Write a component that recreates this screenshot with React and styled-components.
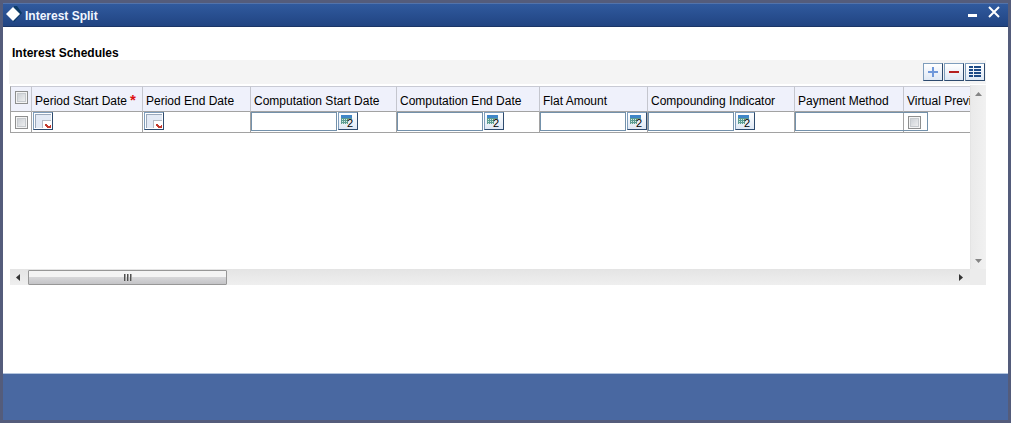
import React from "react";
import styled, { createGlobalStyle } from "styled-components";

const GlobalStyle = createGlobalStyle`
  * {
    box-sizing: border-box;
  }
  body {
    margin: 0;
    font-family: "Liberation Sans", Arial, sans-serif;
    font-size: 12px;
    color: #000000;
  }
`;

const Window = styled.div`
  display: flex;
  flex-direction: column;
  min-height: 100vh;
  border: 3px solid #545c7b;
  background-color: #ffffff;
`;

const TitleBar = styled.header`
  display: flex;
  align-items: center;
  height: 24px;
  padding: 0 8px 0 2px;
  background: linear-gradient(#305a9e, #214482);
  border-top: 1px solid #5273ab;
  border-bottom: 1px solid #1b3566;
`;

const Title = styled.h1`
  flex: 1;
  margin: 0 0 0 2px;
  padding-top: 2px;
  font-size: 12px;
  line-height: 16px;
  color: #f0f6ff;
`;

const WindowButton = styled.button`
  display: flex;
  align-self: flex-start;
  width: 12px;
  height: 16px;
  margin-left: 10px;
  padding: 0;
  border: none;
  background: none;
`;

const Body = styled.main`
  flex: 1;
  padding: 18px 22px 0 6px;
`;

const Heading = styled.h2`
  margin: 0;
  padding: 1px 0 0 3px;
  font-size: 12px;
  line-height: 14px;
`;

const Toolbar = styled.div`
  display: flex;
  justify-content: flex-end;
  gap: 1px;
  height: 24px;
  padding: 3px 1px 0 0;
  background-color: #f4f4f4;
`;

const IconButton = styled.button`
  display: flex;
  align-items: center;
  justify-content: center;
  flex: none;
  width: 20px;
  height: 18px;
  padding: 0;
  border: 1px solid #7e9dbc;
  border-right-color: #2d4a6e;
  border-bottom-color: #2d4a6e;
  background: linear-gradient(#ffffff, #dfe8f4);
`;

const Grid = styled.div`
  display: grid;
  grid-template-columns: minmax(0, 1fr) 16px;
  grid-template-rows: 184px 16px;
  margin: 1px 0 0 1px;
`;

const Viewport = styled.div`
  overflow: hidden;
  padding-top: 1px;
`;

const Table = styled.table`
  width: 1040px;
  table-layout: fixed;
  border-collapse: separate;
  border-spacing: 0;
`;

const Th = styled.th`
  height: 26px;
  padding: 4px 0 0 3px;
  border-top: 1px solid #c8cad4;
  border-right: 1px solid #c4c6ce;
  border-bottom: 1px solid #a2a2a2;
  background-color: #eff1fb;
  font-weight: normal;
  line-height: 15px;
  text-align: left;
  white-space: nowrap;
  &:first-child {
    padding: 0 0 3px 4px;
    border-left: 1px solid #a2a2a2;
  }
`;

const Required = styled.span`
  margin-left: 3px;
  color: #dd1111;
  font-size: 15px;
  font-weight: bold;
  line-height: 12px;
`;

const Td = styled.td`
  height: 21px;
  padding: 0;
  border-right: 1px solid #a2a2a2;
  border-bottom: 1px solid #a2a2a2;
  &:first-child {
    padding-left: 4px;
    border-left: 1px solid #a2a2a2;
  }
`;

const Field = styled.div`
  display: flex;
  gap: 1px;
  height: 20px;
  padding-left: ${(props) => (props.$inset ? "1px" : "0")};
`;

const TextInput = styled.input`
  flex: none;
  width: ${(props) => (props.$wide ? "133px" : "86px")};
  height: 19px;
  padding: 0 3px;
  border: 1px solid #7391ab;
  background: transparent;
  font: inherit;
`;

const Checkbox = styled.input.attrs({ type: "checkbox" })`
  appearance: none;
  display: block;
  width: 13px;
  height: 13px;
  margin: 0 0 0 ${(props) => (props.$inset ? "4px" : "0")};
  border: 1px solid #8e8f8f;
  background: linear-gradient(135deg, #c4c9cf, #f6f6f6);
  box-shadow: inset 0 0 0 1px #f4f4f4, inset 0 0 0 2px #c6cace;
`;

const VerticalBar = styled.div`
  display: flex;
  flex-direction: column;
  align-items: center;
  justify-content: space-between;
  padding: 7px 0 6px;
  border-left: 1px solid #e4e4e4;
  background: linear-gradient(90deg, #eaeaea, #f1f1f1);
`;

const HorizontalBar = styled.div`
  display: flex;
  align-items: center;
  padding: 0 6px 0 5px;
  background: linear-gradient(#e4e4e4, #efefef);
`;

const Thumb = styled.div`
  display: flex;
  align-items: flex-start;
  justify-content: center;
  width: 199px;
  height: 15px;
  margin: 0 auto 0 7px;
  padding-top: 3px;
  border: 1px solid #979797;
  border-radius: 1px;
  background: linear-gradient(#f4f4f4 0 45%, #d6d6d8 50%, #c4c4c7);
`;

const Corner = styled.div`
  background-color: #ececec;
`;

const Footer = styled.footer`
  height: 47px;
  border-top: 1px solid #b4c5de;
  background-color: #4968a1;
`;

const columns = [
  { label: "Period Start Date", width: 111, kind: "date", required: true },
  { label: "Period End Date", width: 108, kind: "date" },
  { label: "Computation Start Date", width: 146, kind: "lookup" },
  { label: "Computation End Date", width: 143, kind: "lookup" },
  { label: "Flat Amount", width: 108, kind: "lookup" },
  { label: "Compounding Indicator", width: 147, kind: "lookup" },
  { label: "Payment Method", width: 109, kind: "text" },
  { label: "Virtual Preview", width: 196, kind: "check" },
];

function LogoIcon() {
  return (
    <svg width="18" height="18" viewBox="0 0 18 18" aria-hidden="true">
      <path d="M9 0h3l5 7-8 9-2-2z" fill="#0c3a66" />
      <path d="M8 1l7 7-7 7-7-7z" fill="#ffffff" />
    </svg>
  );
}

function CalendarIcon() {
  return (
    <svg width="18" height="16" viewBox="0 0 18 16" shapeRendering="crispEdges" aria-hidden="true">
      <path d="M0 0h18v16H0z" fill="#ffffff" />
      <path d="M2 2h15v13H2z" fill="#e3eaf5" />
      <path d="M1 15V1h16v1H2v13z" fill="#9aa8ba" />
      <path d="M9 15V8h8v7z" fill="#ffffff" />
      <path d="M8 15V7h9v1H9v7z" fill="#b4bac4" />
      <path d="M11 11h2v1h1v1h2v-1h1v3h-4v-1h-1v-1h-1z" fill="#c43a2e" />
    </svg>
  );
}

function LookupIcon() {
  return (
    <svg width="18" height="16" viewBox="0 0 18 16" aria-hidden="true">
      <g shapeRendering="crispEdges">
        <path d="M2 2h11v3H2z" fill="#3f86c8" />
        <path d="M2 5h11v6H2z" fill="#5c9c92" />
        <path
          d="M3 6h1v1H3zM5 6h1v1H5zM7 6h1v1H7zM9 6h1v1H9zM3 8h1v1H3zM5 8h1v1H5zM7 8h1v1H7zM3 10h1v1H3zM5 10h1v1H5zM7 10h1v1H7z"
          fill="#d5eadf"
        />
        <path d="M9 6h5v8H9z" fill="#e8eef6" />
      </g>
      <text x="8" y="14" fontSize="11" fill="#000000">
        2
      </text>
    </svg>
  );
}

function Cell({ column }) {
  if (column.kind === "date") {
    return (
      <Field $inset>
        <IconButton aria-label={`Pick ${column.label}`}>
          <CalendarIcon />
        </IconButton>
      </Field>
    );
  }
  if (column.kind === "check") {
    return <Checkbox $inset aria-label={column.label} />;
  }
  return (
    <Field>
      <TextInput type="text" aria-label={column.label} $wide={column.kind === "text"} />
      {column.kind === "lookup" && (
        <IconButton aria-label={`Look up ${column.label}`}>
          <LookupIcon />
        </IconButton>
      )}
    </Field>
  );
}

export default function App() {
  return (
    <>
      <GlobalStyle />
      <Window>
        <TitleBar>
          <LogoIcon />
          <Title>Interest Split</Title>
          <WindowButton aria-label="Minimize">
            <svg width="12" height="16" viewBox="0 0 12 16">
              <path d="M2 10h9v3H2z" fill="#ffffff" />
            </svg>
          </WindowButton>
          <WindowButton aria-label="Close">
            <svg width="12" height="16" viewBox="0 0 12 16">
              <path d="M1 3l10 10M11 3L1 13" stroke="#ffffff" strokeWidth="2" />
            </svg>
          </WindowButton>
        </TitleBar>
        <Body>
          <Heading>Interest Schedules</Heading>
          <Toolbar>
            <IconButton aria-label="Add row">
              <svg width="12" height="12" viewBox="0 0 12 12">
                <path d="M1 6h10M6 1v10" stroke="#6f98da" strokeWidth="2" />
              </svg>
            </IconButton>
            <IconButton aria-label="Delete row">
              <svg width="12" height="12" viewBox="0 0 12 12">
                <path d="M1 6h10" stroke="#b5201f" strokeWidth="2" />
              </svg>
            </IconButton>
            <IconButton aria-label="Single view">
              <svg width="12" height="12" viewBox="0 0 12 12" shapeRendering="crispEdges">
                <path
                  d="M0 0h4v2H0zM5 0h7v2H5zM0 3h4v2H0zM5 3h7v2H5zM0 6h4v2H0zM5 6h7v2H5zM0 9h4v2H0zM5 9h7v2H5z"
                  fill="#1c4a86"
                />
              </svg>
            </IconButton>
          </Toolbar>
          <Grid>
            <Viewport>
              <Table>
                <colgroup>
                  <col width="22" />
                  {columns.map((column) => (
                    <col key={column.label} width={column.width} />
                  ))}
                </colgroup>
                <thead>
                  <tr>
                    <Th>
                      <Checkbox aria-label="Select all rows" />
                    </Th>
                    {columns.map((column) => (
                      <Th key={column.label}>
                        {column.label}
                        {column.required && <Required>*</Required>}
                      </Th>
                    ))}
                  </tr>
                </thead>
                <tbody>
                  <tr>
                    <Td>
                      <Checkbox aria-label="Select row" />
                    </Td>
                    {columns.map((column) => (
                      <Td key={column.label}>
                        <Cell column={column} />
                      </Td>
                    ))}
                  </tr>
                </tbody>
              </Table>
            </Viewport>
            <VerticalBar>
              <svg width="7" height="4" viewBox="0 0 7 4">
                <path d="M0 4l3.500-4L7 4z" fill="#858585" />
              </svg>
              <svg width="7" height="4" viewBox="0 0 7 4">
                <path d="M0 0l3.500 4L7 0z" fill="#858585" />
              </svg>
            </VerticalBar>
            <HorizontalBar>
              <svg width="6" height="7" viewBox="0 0 6 7">
                <path d="M5 0L1 3.500 5 7z" fill="#333333" />
              </svg>
              <Thumb>
                <svg width="8" height="7" viewBox="0 0 8 7" shapeRendering="crispEdges">
                  <path d="M0 0h2v7H0zM3 0h2v7H3zM6 0h2v7H6z" fill="#a0a0a0" />
                  <path d="M0 0h1v7H0zM3 0h1v7H3zM6 0h1v7H6z" fill="#505050" />
                </svg>
              </Thumb>
              <svg width="6" height="7" viewBox="0 0 6 7">
                <path d="M1 0l4 3.500L1 7z" fill="#333333" />
              </svg>
            </HorizontalBar>
            <Corner />
          </Grid>
        </Body>
        <Footer />
      </Window>
    </>
  );
}
